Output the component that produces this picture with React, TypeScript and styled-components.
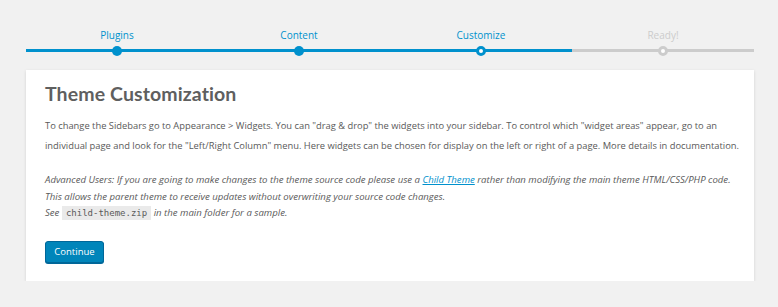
import React from "react";
import styled, { createGlobalStyle } from "styled-components";

const Global = createGlobalStyle`
    html, body {
        margin: 0;
        padding: 0;
        background: #f1f1f1;
        font-family: "Open Sans", "Noto Sans", sans-serif;
    }
`

const Page = styled.div`
    width: 728px;
    padding: 0 24px 0 26px;
`

const Steps = styled.ol`
    list-style: none;
    margin: 0;
    padding: 26px 0 0;
    display: grid;
    grid-template-columns: repeat(4, 1fr);
`

const Step = styled.li<{ $done: boolean }>`
    position: relative;
    text-align: center;
    height: 26px;
    padding-top: 2px;
    font-size: 10px;
    color: ${p => (p.$done ? "#0091cd" : "#ccc")};
    border-bottom: 3px solid ${p => (p.$done ? "#0091cd" : "#ccc")};
    box-sizing: border-box;
`

const Dot = styled.span<{ $done: boolean; $active?: boolean }>`
    position: absolute;
    left: 50%;
    bottom: -7px;
    margin-left: -5px;
    width: 10px;
    height: 10px;
    border-radius: 50%;
    box-sizing: border-box;
    background: ${p => (p.$active || !p.$done ? "#fff" : "#0091cd")};
    border: ${p => (p.$active ? "3px solid #0091cd" : p.$done ? "none" : "3px solid #ccc")};
`

const Card = styled.div`
    margin-top: 18px;
    background: #fff;
    box-shadow: 0 1px 3px rgba(0, 0, 0, 0.13);
    padding: 12px 12px 18px 19px;
    color: #5a5a5a;
`

const Title = styled.h1`
    margin: 0 0 10px;
    font-family: "Lato", "Open Sans", sans-serif;
    font-size: 19.5px;
    line-height: 24px;
    font-weight: 700;
    color: #5f5f5f;
    letter-spacing: 0.1px;
`

const Text = styled.p`
    margin: 0 0 16px;
    font-size: 9.35px;
    line-height: 20px;
`

const Note = styled.p`
    margin: 0;
    font-size: 9.6px;
    line-height: 16.5px;
    font-style: italic;
`

const Link = styled.a`
    color: #0091cd;
    text-decoration: underline;
`

const Code = styled.code`
    font-family: "DejaVu Sans Mono", monospace;
    font-style: normal;
    font-size: 9px;
    background: #eaeaea;
    padding: 2px 4px;
`

const Button = styled.button`
    display: block;
    margin-top: 19px;
    height: 22px;
    width: 59px;
    padding: 0;
    background: #0085ba;
    border: 1px solid #006799;
    border-radius: 3px;
    color: #fff;
    font-family: "Open Sans", sans-serif;
    font-size: 9.5px;
    box-shadow: 0 1px 0 #006799;
`

const steps = [
    { name: "Plugins", done: true },
    { name: "Content", done: true },
    { name: "Customize", done: true, active: true },
    { name: "Ready!", done: false },
]

export default function App() {
    return (
        <Page>
            <Global />
            <Steps>
                {steps.map(s => (
                    <Step key={s.name} $done={s.done}>
                        {s.name}
                        <Dot $done={s.done} $active={s.active} />
                    </Step>
                ))}
            </Steps>
            <Card>
                <Title>Theme Customization</Title>
                <Text>
                    To change the Sidebars go to Appearance &gt; Widgets. You can "drag &amp; drop" the widgets into your sidebar. To control which "widget areas" appear, go to an individual page and look for the "Left/Right Column" menu. Here widgets can be chosen for display on the left or right of a page. More details in documentation.
                </Text>
                <Note>
                    Advanced Users: If you are going to make changes to the theme source code please use a <Link href="#">Child Theme</Link> rather than modifying the main theme HTML/CSS/PHP code.
                    <br />
                    This allows the parent theme to receive updates without overwriting your source code changes.
                    <br />
                    See <Code>child-theme.zip</Code> in the main folder for a sample.
                </Note>
                <Button>Continue</Button>
            </Card>
        </Page>
    );
}
